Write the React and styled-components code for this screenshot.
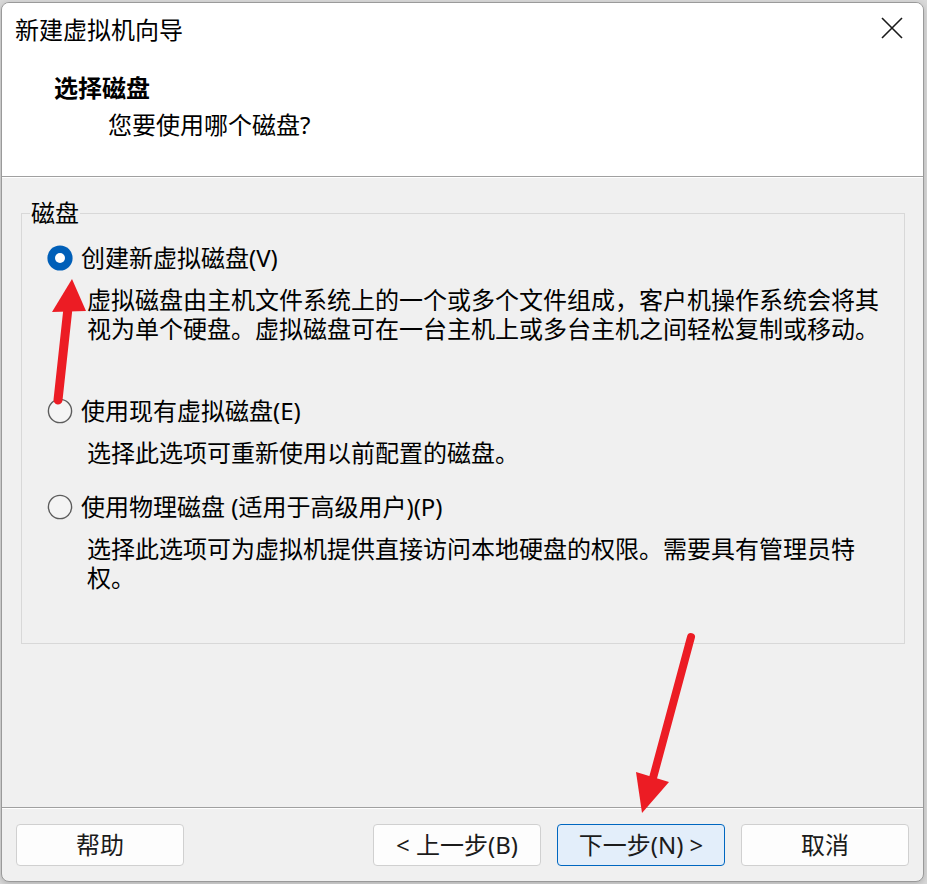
import React from "react";
import styled, { createGlobalStyle } from "styled-components";

const Global = createGlobalStyle`
  html, body { margin: 0; padding: 0; background: #d9d9d9; }
  body { font-family: "Noto Sans", "Noto Sans CJK SC", sans-serif; color: #000; }
  * { box-sizing: border-box; }
`;

const Page = styled.div`
  position: relative;
  width: 927px;
  height: 884px;
  overflow: hidden;
  background: #d9d9d9;
  padding: 2px 0 0 1px;
`;

const Window = styled.div`
  width: 923px;
  height: 880px;
  border: 1px solid #9a9a9a;
  border-radius: 8px;
  overflow: hidden;
  display: flex;
  flex-direction: column;
  background: #f0f0f0;
  box-shadow: 0 2px 6px rgba(0, 0, 0, 0.18);
`;

const TitleBar = styled.div`
  height: 54px;
  flex: none;
  display: flex;
  align-items: center;
  justify-content: space-between;
  padding: 0 20px 0 13px;
  background: #fff;
`;

const Title = styled.div`
  font-size: 24px;
  line-height: 32px;
`;

const CloseIcon = styled.svg`
  width: 22px;
  height: 22px;
  margin-bottom: 4px;
`;

const Header = styled.div`
  flex: none;
  background: #fff;
  padding: 15px 0 35px 52px;
  border-bottom: 1px solid #a0a0a0;
`;

const Heading = styled.div`
  font-size: 24px;
  line-height: 32px;
  font-weight: 700;
`;

const SubHeading = styled.div`
  font-size: 24px;
  line-height: 32px;
  margin: 5px 0 0 54px;
`;

const Body = styled.div`
  flex: 1;
  border-top: 1px solid #fff;
  padding-top: 21px;
`;

const Group = styled.fieldset`
  margin: 0 18px 0 19px;
  padding: 15px 0 51px 0;
  border: 1px solid #d8d8d8;
  min-width: 0;
`;

const Legend = styled.legend`
  margin-left: 8px;
  padding: 0 1px;
  font-size: 24px;
  line-height: 28px;
`;

const OptionRow = styled.div`
  display: flex;
  align-items: center;
  height: 32px;
  margin-top: ${(p) => p.$top || 0}px;
  padding-left: 25px;
`;

const RadioIcon = styled.svg`
  width: 26px;
  height: 26px;
  flex: none;
`;

const OptionLabel = styled.span`
  margin-left: 8px;
  font-size: 24px;
  line-height: 32px;
  white-space: nowrap;
`;

const Desc = styled.div`
  margin: 11px 0 0 65px;
  width: 800px;
  font-size: 24px;
  line-height: 29px;
  line-break: strict;
`;

const Footer = styled.div`
  flex: none;
  display: flex;
  align-items: flex-start;
  gap: 16px;
  padding: 16px 14px 15px 14px;
  border-top: 1px solid #a0a0a0;
  box-shadow: inset 0 1px 0 #fff;
`;

const Spacer = styled.div`
  flex: 1;
`;

const Button = styled.button`
  width: 168px;
  height: 42px;
  border-radius: 4px;
  border: 1px solid ${(p) => (p.$primary ? "#0067c0" : "#d0d0d0")};
  background: ${(p) => (p.$primary ? "#e3eefa" : "#fdfdfd")};
  font-family: "Noto Sans", "Noto Sans CJK SC", sans-serif;
  font-size: 24px;
  line-height: 30px;
  color: #1b1b1b;
  padding: 0;
  white-space: nowrap;
`;

const Overlay = styled.svg`
  position: absolute;
  left: 0;
  top: 0;
  width: 927px;
  height: 884px;
  pointer-events: none;
`;

function Radio({ checked }) {
  return (
    <RadioIcon viewBox="0 0 26 26">
      {checked ? (
        <>
          <circle cx="13" cy="13" r="12.6" fill="#005fb8" />
          <circle cx="13" cy="13" r="5" fill="#fff" />
        </>
      ) : (
        <circle cx="13" cy="13" r="11.6" fill="#f4f4f4" stroke="#5c5c5c" strokeWidth="1.4" />
      )}
    </RadioIcon>
  );
}

const options = [
  {
    label: "创建新虚拟磁盘(V)",
    desc: "虚拟磁盘由主机文件系统上的一个或多个文件组成，客户机操作系统会将其视为单个硬盘。虚拟磁盘可在一台主机上或多台主机之间轻松复制或移动。",
    checked: true,
    top: 0,
  },
  {
    label: "使用现有虚拟磁盘(E)",
    desc: "选择此选项可重新使用以前配置的磁盘。",
    top: 52,
  },
  {
    label: "使用物理磁盘 (适用于高级用户)(P)",
    desc: "选择此选项可为虚拟机提供直接访问本地硬盘的权限。需要具有管理员特权。",
    top: 24,
  },
];

export default function App() {
  return (
    <>
      <Global />
      <Page>
        <Window>
          <TitleBar>
            <Title>新建虚拟机向导</Title>
            <CloseIcon viewBox="0 0 22 22">
              <path d="M1 1 L21 21 M21 1 L1 21" stroke="#1a1a1a" strokeWidth="1.6" fill="none" />
            </CloseIcon>
          </TitleBar>
          <Header>
            <Heading>选择磁盘</Heading>
            <SubHeading>您要使用哪个磁盘?</SubHeading>
          </Header>
          <Body>
            <Group>
              <Legend>磁盘</Legend>
              {options.map((o) => (
                <React.Fragment key={o.label}>
                  <OptionRow $top={o.top}>
                    <Radio checked={o.checked} />
                    <OptionLabel>{o.label}</OptionLabel>
                  </OptionRow>
                  <Desc>{o.desc}</Desc>
                </React.Fragment>
              ))}
            </Group>
          </Body>
          <Footer>
            <Button>帮助</Button>
            <Spacer />
            <Button>&lt; 上一步(B)</Button>
            <Button $primary>下一步(N) &gt;</Button>
            <Button>取消</Button>
          </Footer>
        </Window>
        <Overlay viewBox="0 0 927 884">
          <line x1="58" y1="400" x2="68" y2="308" stroke="#ec1c24" strokeWidth="9" strokeLinecap="round" />
          <polygon points="72,279 52,312 86,311" fill="#ec1c24" />
          <line x1="691" y1="637" x2="653" y2="778" stroke="#ec1c24" strokeWidth="8" strokeLinecap="round" />
          <polygon points="636,772 669,782 642,813" fill="#ec1c24" />
        </Overlay>
      </Page>
    </>
  );
}
